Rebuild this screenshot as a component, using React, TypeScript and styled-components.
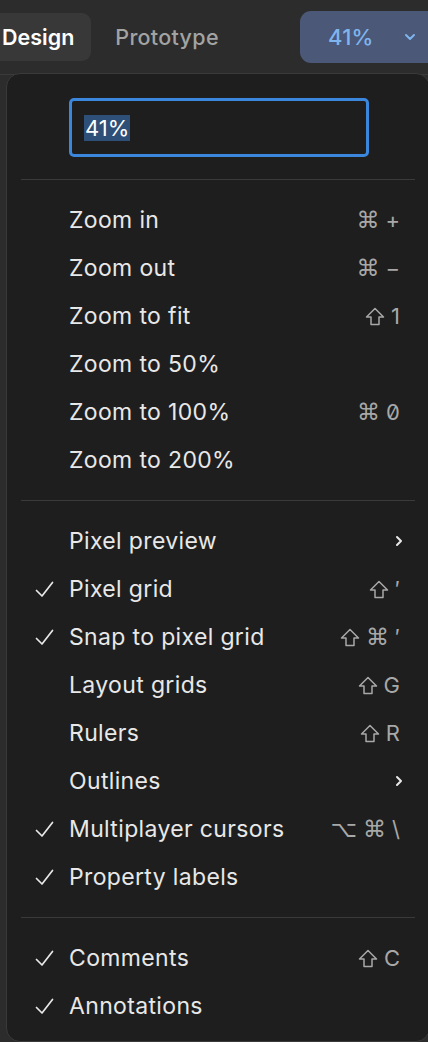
import React from "react";
import styled, { createGlobalStyle } from "styled-components";

const Global = createGlobalStyle`
  html, body { margin: 0; padding: 0; background: #2c2c2c; }
  body { font-family: Inter, "Noto Sans", "DejaVu Sans", sans-serif; overflow: hidden; }
  #root { width: 428px; height: 1042px; overflow: hidden; }
`;

const Page = styled.div`
  width: 428px;
  height: 1042px;
  background: #2c2c2c;
  display: flex;
  flex-direction: column;
  overflow: hidden;
`;

const Header = styled.div`
  height: 75px;
  flex: none;
  display: flex;
  align-items: center;
  margin-left: -16px;
  border-bottom: 1px solid #3a3a3a;
  box-sizing: border-box;
`;

const Tab = styled.div<{ $active?: boolean }>`
  height: 48px;
  display: flex;
  align-items: center;
  padding: 0 17px 0 18px;
  border-radius: 9px;
  font-size: 21.5px;
  letter-spacing: ${(p) => (p.$active ? "0" : "0.3px")};
  font-weight: ${(p) => (p.$active ? 600 : 500)};
  color: ${(p) => (p.$active ? "#ffffff" : "#a3a3a3")};
  background: ${(p) => (p.$active ? "#383838" : "transparent")};
  margin-right: 6px;
`;

const ZoomButton = styled.div`
  margin-left: auto;
  height: 52px;
  width: 140px;
  margin-right: -12px;
  border-radius: 11px;
  background: #4b5877;
  display: flex;
  align-items: center;
  padding-left: 28px;
  box-sizing: border-box;
  gap: 30px;
  color: #7fb5ef;
  font-size: 22px;
  font-weight: 500;
  letter-spacing: 0.3px;
`;

const Menu = styled.div`
  margin-left: 6px;
  margin-top: -2px;
  width: 424px;
  flex: 1;
  background: #1e1e1e;
  border: 1px solid #3a3a3a;
  border-radius: 14px;
  box-sizing: border-box;
  padding-top: 24px;
  display: flex;
  flex-direction: column;
`;

const InputBox = styled.div`
  margin-left: 62px;
  width: 300px;
  height: 59px;
  box-sizing: border-box;
  border: 3px solid #3b87dd;
  border-radius: 5px;
  display: flex;
  align-items: center;
  padding-left: 12px;
  flex: none;
`;

const Selected = styled.span`
  background: #2d4f78;
  color: #ffffff;
  font-size: 22px;
  line-height: 26px;
  padding: 0 1px;
`;

const Separator = styled.div<{ $top?: number }>`
  flex: none;
  height: 1px;
  background: #3a3a3a;
  margin: ${(p) => p.$top ?? 16}px 14px 16px 14px;
`;

const Row = styled.div`
  flex: none;
  height: 48px;
  display: grid;
  grid-template-columns: 62px 1fr auto;
  align-items: center;
  padding-right: 29px;
`;

const CheckCell = styled.div`
  display: flex;
  align-items: center;
  padding-left: 28px;
`;

const Label = styled.div`
  font-size: 23px;
  color: #e8e8e8;
  letter-spacing: 0.35px;
  white-space: nowrap;
`;

const Shortcut = styled.div`
  font-size: 22px;
  color: #a8a8a8;
  display: flex;
  align-items: center;
  gap: 6px;
  font-feature-settings: "zero" 1;
`;

const Key = styled.span`
  font-family: "DejaVu Sans", sans-serif;
  font-size: 23px;
`;

const ChevronWrap = styled.span`
  display: flex;
  margin-right: -3px;
`;

const Check = () => (
  <svg width="19" height="17" viewBox="0 0 19 17" fill="none">
    <path d="M1.5 9.5 L7 15 L17.5 1.5" stroke="#e8e8e8" strokeWidth="1.7" strokeLinecap="round" strokeLinejoin="round" />
  </svg>
);

const Chevron = () => (
  <ChevronWrap>
    <svg width="8" height="12" viewBox="0 0 8 12" fill="none">
      <path d="M2 2 L6 6 L2 10" stroke="#e8e8e8" strokeWidth="2" strokeLinecap="round" strokeLinejoin="round" />
    </svg>
  </ChevronWrap>
);

const Shift = () => (
  <svg width="20" height="19" viewBox="0 0 20 19" fill="none">
    <path d="M10 1.5 L18.5 10 L14 10 L14 17.5 L6 17.5 L6 10 L1.5 10 Z" stroke="#a8a8a8" strokeWidth="1.5" strokeLinejoin="round" />
  </svg>
);

type Item = { label: string; checked?: boolean; keys?: React.ReactNode; sub?: boolean };

const K = (t: string) => <Key>{t}</Key>;
const SH = <Shift />;

const group1: Item[] = [
  { label: "Zoom in", keys: <>{K("⌘")}<span>+</span></> },
  { label: "Zoom out", keys: <>{K("⌘")}<span>−</span></> },
  { label: "Zoom to fit", keys: <>{SH}<span>1</span></> },
  { label: "Zoom to 50%" },
  { label: "Zoom to 100%", keys: <>{K("⌘")}<span>0</span></> },
  { label: "Zoom to 200%" },
];

const group2: Item[] = [
  { label: "Pixel preview", sub: true },
  { label: "Pixel grid", checked: true, keys: <>{SH}<span>′</span></> },
  { label: "Snap to pixel grid", checked: true, keys: <>{SH}{K("⌘")}<span>′</span></> },
  { label: "Layout grids", keys: <>{SH}<span>G</span></> },
  { label: "Rulers", keys: <>{SH}<span>R</span></> },
  { label: "Outlines", sub: true },
  { label: "Multiplayer cursors", checked: true, keys: <>{K("⌥")}{K("⌘")}<span>\</span></> },
  { label: "Property labels", checked: true },
];

const group3: Item[] = [
  { label: "Comments", checked: true, keys: <>{SH}<span>C</span></> },
  { label: "Annotations", checked: true },
];

const MenuRow = ({ item }: { item: Item }) => (
  <Row>
    <CheckCell>{item.checked ? <Check /> : null}</CheckCell>
    <Label>{item.label}</Label>
    <Shortcut>{item.sub ? <Chevron /> : item.keys}</Shortcut>
  </Row>
);

export default function App() {
  return (
    <Page>
      <Global />
      <Header>
        <Tab $active>Design</Tab>
        <Tab>Prototype</Tab>
        <ZoomButton>
          <span>41%</span>
          <svg width="12" height="8" viewBox="0 0 12 8" fill="none">
            <path d="M2 2 L6 6 L10 2" stroke="#7fb5ef" strokeWidth="2" strokeLinecap="round" strokeLinejoin="round" />
          </svg>
        </ZoomButton>
      </Header>
      <Menu>
        <InputBox>
          <Selected>41%</Selected>
        </InputBox>
        <Separator $top={22} />
        {group1.map((it) => <MenuRow key={it.label} item={it} />)}
        <Separator />
        {group2.map((it) => <MenuRow key={it.label} item={it} />)}
        <Separator />
        {group3.map((it) => <MenuRow key={it.label} item={it} />)}
      </Menu>
    </Page>
  );
}
